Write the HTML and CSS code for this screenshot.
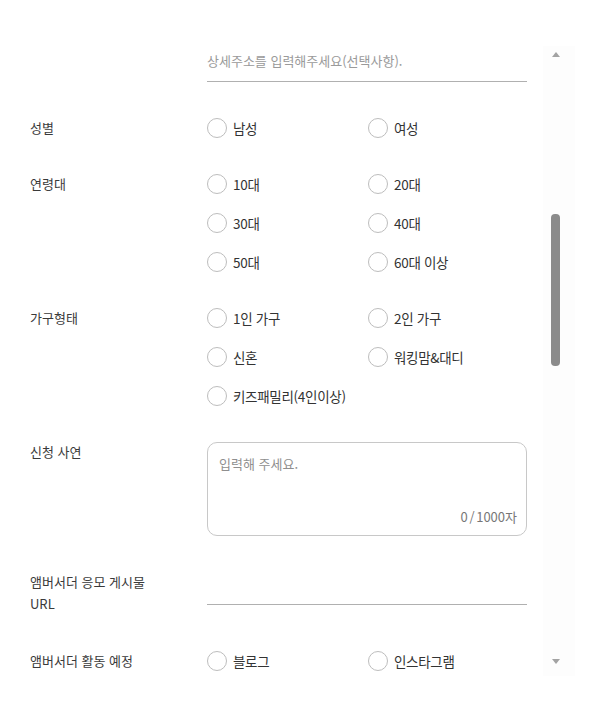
FILE: index.html
```html
<!DOCTYPE html>
<html lang="ko">
<head>
    <meta charset="UTF-8">
    <meta name="viewport" content="width=device-width, initial-scale=1.0">
    <title>앰버서더 신청</title>
    <link rel="stylesheet" href="styles.css">
</head>
<body>
    <div class="panel">
        <form class="apply-form">
            <div class="row">
                <div class="label"></div>
                <div class="field">
                    <input class="line-input addr" type="text" placeholder="상세주소를 입력해주세요(선택사항).">
                </div>
            </div>

            <div class="row">
                <div class="label">성별</div>
                <div class="options">
                    <label class="opt"><span class="radio"></span>남성</label>
                    <label class="opt"><span class="radio"></span>여성</label>
                </div>
            </div>

            <div class="row">
                <div class="label">연령대</div>
                <div class="options">
                    <label class="opt"><span class="radio"></span>10대</label>
                    <label class="opt"><span class="radio"></span>20대</label>
                    <label class="opt"><span class="radio"></span>30대</label>
                    <label class="opt"><span class="radio"></span>40대</label>
                    <label class="opt"><span class="radio"></span>50대</label>
                    <label class="opt"><span class="radio"></span>60대 이상</label>
                </div>
            </div>

            <div class="row">
                <div class="label">가구형태</div>
                <div class="options">
                    <label class="opt"><span class="radio"></span>1인 가구</label>
                    <label class="opt"><span class="radio"></span>2인 가구</label>
                    <label class="opt"><span class="radio"></span>신혼</label>
                    <label class="opt"><span class="radio"></span>워킹맘&amp;대디</label>
                    <label class="opt"><span class="radio"></span>키즈패밀리(4인이상)</label>
                </div>
            </div>

            <div class="row">
                <div class="label">신청 사연</div>
                <div class="field">
                    <div class="textbox">
                        <div class="textbox-ph">입력해 주세요.</div>
                        <div class="counter">0 / 1000자</div>
                    </div>
                </div>
            </div>

            <div class="row">
                <div class="label two-line">앰버서더 응모 게시물<br>URL</div>
                <div class="field">
                    <input class="line-input url" type="text">
                </div>
            </div>

            <div class="row">
                <div class="label">앰버서더 활동 예정</div>
                <div class="options">
                    <label class="opt"><span class="radio"></span>블로그</label>
                    <label class="opt"><span class="radio"></span>인스타그램</label>
                </div>
            </div>
        </form>

        <div class="scrollbar">
            <div class="arrow up"></div>
            <div class="track">
                <div class="thumb"></div>
            </div>
            <div class="arrow down"></div>
        </div>
    </div>
</body>
</html>
```

FILE: styles.css
```css
body {
    margin: 0;
    padding: 0;
    background: #fff;
    color: #333;
    font-family: "Noto Sans CJK KR", "Noto Sans", sans-serif;
    font-size: 13.5px;
}
.panel {
    display: flex;
    height: 715px;
    overflow: hidden;
}
.apply-form {
    width: 543px;
    padding: 46px 0 0 30px;
    box-sizing: border-box;
}
.row {
    display: grid;
    grid-template-columns: 177px 320px;
    margin-bottom: 36px;
}
.label {
    font-size: 13px;
    line-height: 20px;
    color: #3a3a3a;
}
.label.two-line {
    line-height: 22px;
    margin-top: -1px;
}
.line-input {
    display: block;
    width: 100%;
    border: none;
    border-bottom: 1px solid #b0b0b0;
    padding: 0;
    outline: none;
    font-family: inherit;
    font-size: 13px;
    background: transparent;
    box-sizing: border-box;
}
.line-input::placeholder {
    color: #9a9a9a;
}
.line-input.addr {
    height: 36px;
    padding-bottom: 6px;
}
.line-input.url {
    height: 33px;
}
.options {
    display: grid;
    grid-template-columns: 161px 159px;
    row-gap: 19px;
}
.opt {
    display: flex;
    align-items: center;
    gap: 6px;
    height: 20px;
    line-height: 20px;
    color: #333;
    letter-spacing: -0.3px;
}
.radio {
    width: 18px;
    height: 18px;
    border: 1px solid #bdbdbd;
    border-radius: 50%;
    flex: none;
    background: #fff;
}
.textbox {
    height: 94px;
    border: 1px solid #c8c8c8;
    border-radius: 10px;
    box-sizing: border-box;
    padding: 11px 9px 8px 11px;
    display: flex;
    flex-direction: column;
    justify-content: space-between;
    font-size: 13px;
}
.textbox-ph {
    color: #8f8f8f;
    line-height: 20px;
}
.counter {
    text-align: right;
    color: #777;
    line-height: 20px;
    word-spacing: -2px;
}
.scrollbar {
    width: 32px;
    margin-top: 46px;
    height: 630px;
    padding-left: 8px;
    box-sizing: border-box;
    background: #fdfdfd;
    display: flex;
    flex-direction: column;
    align-items: flex-start;
}
.arrow {
    width: 0;
    height: 0;
    margin-left: 1px;
    border-left: 4px solid transparent;
    border-right: 4px solid transparent;
    flex: none;
}
.arrow.up {
    margin-top: 6px;
    border-bottom: 5px solid #a3a3a3;
}
.arrow.down {
    margin-bottom: 12px;
    border-top: 5px solid #a3a3a3;
}
.track {
    flex: 1;
    width: 9px;
}
.thumb {
    margin-top: 157px;
    width: 9px;
    height: 152px;
    border-radius: 4px;
    background: #8b8b8b;
}
```
